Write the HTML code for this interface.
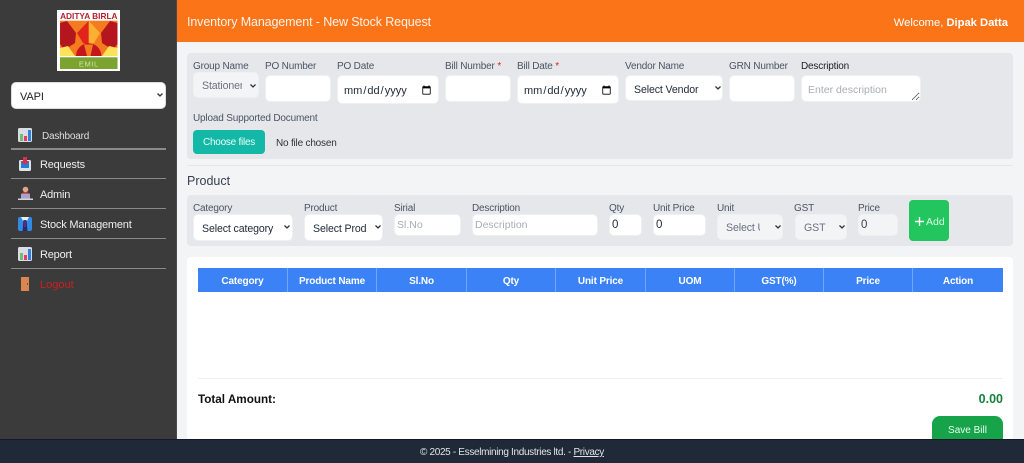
<!DOCTYPE html>
<html><head><meta charset="utf-8"><title>Inventory Management</title>
<style>
*{box-sizing:border-box}
html,body{margin:0;padding:0;width:1024px;height:463px;overflow:hidden;background:#f3f4f6;font-family:"Liberation Sans",sans-serif}
.a,.t,input,select,textarea{position:absolute}
.t{white-space:nowrap;line-height:14px;height:14px}
.l{font-size:10px;letter-spacing:-.18px;color:#4b5563}
input,select,textarea{border:1px solid #eef0f3;border-radius:5px;background:#fff;font-family:"Liberation Sans",sans-serif;font-size:10.5px;color:#1f2937;margin:0;outline:0}
input::placeholder,textarea::placeholder{color:#a9adb5}
select{appearance:none;-webkit-appearance:none;font-size:10.6px;letter-spacing:-.12px;padding:2px 16px 0 8px}
.g{background:#f3f4f6;color:#6b7280}
.n{font-size:11px;letter-spacing:-.2px;color:#eee}
.s{left:11px;width:155px;height:1px;background:#8a8a8a}
.h{top:268px;height:24px;line-height:27px;text-align:center;color:#fff;font-size:10px;letter-spacing:-.15px;font-weight:bold;border-right:1px solid #76a5f8}
textarea{resize:both;padding:8px 6px 0;overflow:hidden}
.c{position:absolute;fill:none;stroke:#333;stroke-width:1.300}
</style></head><body>
<div class="a" style="left:0;top:0;width:177px;height:463px;background:#3b3b3b;border-right:1px solid #4a4a4a"></div>
<svg class="a" style="left:57px;top:10px" width="63" height="61" viewBox="0 0 63 61">
<rect width="63" height="61" fill="#fff"/>
<text x="31.800" y="9" text-anchor="middle" font-family="Liberation Sans" font-weight="bold" font-size="8.300" fill="#b5202e">ADITYA BIRLA</text>
<rect x="3" y="10.700" width="57.500" height="35.300" fill="#f47b20"/>
<path d="M3 13 10 11 19 23 18 33 7 40 3 34Z" fill="#b5161d"/>
<path d="M60.500 13 53 11 44 23 45 33 56 40 60.500 34Z" fill="#b5161d"/>
<path d="M31.500 11 20 23 26 33 31.500 35Z" fill="#e2231a"/>
<path d="M32 11 43 23 37 33 32 35Z" fill="#fbb034"/>
<path d="M3 46V38L11 36 18 46ZM60.500 46V38L52 36 45 46Z" fill="#fde25a"/>
<path d="M19 46A12.700 12.700 0 0 1 44.400 46Z" fill="#c4161c"/>
<path d="M30 46 27 34.500H36L33.500 46Z" fill="#f47b20"/>
<rect x="3" y="47.300" width="57.500" height="11.700" fill="#7aa32f"/>
<text x="31.800" y="56.500" text-anchor="middle" font-family="Liberation Sans" font-size="7.500" letter-spacing=".6" fill="#cfe3a6">EMIL</text>
</svg>
<select style="left:11px;top:82px;width:155px;height:27px;font-size:11px;color:#222;border-color:#ddd"><option>VAPI</option></select>
<svg class="c" style="left:157px;top:93px" width="6" height="4"><path d="M.5.5 3 3 5.500.5"/></svg>

<svg class="a" style="left:18px;top:128px" width="15" height="14" viewBox="0 0 15 14"><rect width="14" height="14" rx="1.500" fill="#d9dde3"/><rect x="2" y="6" width="3" height="7" fill="#6cc070"/><rect x="6" y="8" width="3" height="5" fill="#e8386d"/><rect x="10" y="2" width="3" height="11" fill="#2f80d8"/></svg>
<div class="t n" style="left:42px;top:130px;font-size:10px;color:#ddd">Dashboard</div>
<div class="a s" style="top:148px;height:2px"></div>
<svg class="a" style="left:19px;top:157px" width="13" height="14" viewBox="0 0 13 14"><rect y="3" width="12" height="11" rx="1.500" fill="#dfe3e8"/><rect x="2" y="5" width="8" height="6" fill="#1f7fd8"/><path d="M4 0H8V4H10.500L6 8 1.500 4H4Z" fill="#d6304f"/></svg>
<div class="t n" style="left:40px;top:158px">Requests</div>
<div class="a s" style="top:178px"></div>
<svg class="a" style="left:18px;top:186px" width="15" height="14" viewBox="0 0 15 14"><circle cx="7.500" cy="3.500" r="2.800" fill="#e3a58a"/><path d="M3 12V8.500Q3 6.500 7.500 6.500T12 8.500V12Z" fill="#c9544f"/><rect x="3" y="8" width="9" height="5" fill="#a9a3c7"/><rect y="12.500" width="15" height="1.500" fill="#d5d5d8"/></svg>
<div class="t n" style="left:40px;top:188px">Admin</div>
<div class="a s" style="top:208px"></div>
<svg class="a" style="left:18px;top:217px" width="14" height="14" viewBox="0 0 14 14"><rect width="14" height="14" rx="2" fill="#2f8be6"/><path d="M3 0H11L9 4H5Z" fill="#e6eef8"/><path d="M5.500 3H8.500L9.500 14H4.500Z" fill="#2c2a6b"/><path d="M6.300 3H7.700L8 10H6Z" fill="#6d2a6b"/></svg>
<div class="t n" style="left:40px;top:218px">Stock Management</div>
<div class="a s" style="top:238px"></div>
<svg class="a" style="left:18px;top:247px" width="15" height="14" viewBox="0 0 15 14"><rect width="14" height="14" rx="1.500" fill="#d9dde3"/><rect x="2" y="6" width="3" height="7" fill="#6cc070"/><rect x="6" y="8" width="3" height="5" fill="#e8386d"/><rect x="10" y="2" width="3" height="11" fill="#2f80d8"/></svg>
<div class="t n" style="left:40px;top:248px">Report</div>
<div class="a s" style="top:268px"></div>
<svg class="a" style="left:21px;top:277px" width="8" height="14" viewBox="0 0 8 14"><rect width="8" height="14" fill="#d98650"/><rect x="6" y="6" width="1" height="2" fill="#8a4a24"/></svg>
<div class="t" style="left:40px;top:278px;font-size:11px;color:#cc1f1f">Logout</div>

<div class="a" style="left:177px;top:0;width:847px;height:42px;background:#fb7518"></div>
<div class="t" style="left:187px;top:15px;font-size:12.500px;letter-spacing:-.12px;font-weight:500;color:#fff2e8">Inventory Management - New Stock Request</div>
<div class="t" style="right:16px;top:16px;font-size:11.200px;color:#fff">Welcome, <b>Dipak Datta</b></div>

<div class="a" style="left:187px;top:53px;width:826px;height:106px;background:#e5e7eb;border-radius:4px"></div>
<div class="t l" style="left:193px;top:60px">Group Name</div>
<select class="g" style="left:193px;top:72px;width:66px;height:26px"><option>Stationery</option></select>
<svg class="c" style="left:250px;top:84px" width="6" height="4"><path d="M.5.5 3 3 5.500.5"/></svg>
<div class="t l" style="left:265px;top:60px">PO Number</div>
<input style="left:265px;top:75px;width:66px;height:27px">
<div class="t l" style="left:337px;top:60px">PO Date</div>
<input type="date" style="left:337px;top:75px;width:102px;height:29px;padding:2px 4px 0 5px;font-size:11px">
<div class="t l" style="left:445px;top:60px">Bill Number <span style="color:#e02424">*</span></div>
<input style="left:445px;top:75px;width:66px;height:27px">
<div class="t l" style="left:517px;top:60px">Bill Date <span style="color:#e02424">*</span></div>
<input type="date" style="left:517px;top:75px;width:102px;height:29px;padding:2px 4px 0 5px;font-size:11px">
<div class="t l" style="left:625px;top:60px">Vendor Name</div>
<select style="left:625px;top:75px;width:98px;height:26px;padding-top:3px"><option>Select Vendor</option></select>
<svg class="c" style="left:715px;top:86px" width="6" height="4"><path d="M.5.5 3 3 5.500.5"/></svg>
<div class="t l" style="left:729px;top:60px">GRN Number</div>
<input style="left:729px;top:75px;width:66px;height:27px">
<div class="t l" style="left:801px;top:60px;color:#222;font-weight:500">Description</div>
<textarea placeholder="Enter description" style="left:801px;top:75px;width:120px;height:27px"></textarea>
<div class="t l" style="left:193px;top:112px">Upload Supported Document</div>
<div class="a" style="left:193px;top:130px;width:72px;height:24px;background:#14b8a6;border-radius:4px;color:#eafffb;font-size:10px;letter-spacing:-.25px;text-align:center;line-height:26px">Choose files</div>
<div class="t" style="left:276px;top:137px;font-size:10px;letter-spacing:-.2px;color:#333">No file chosen</div>
<div class="a" style="left:187px;top:165px;width:826px;height:1px;background:#e5e7eb"></div>

<div class="t" style="left:187px;top:174px;font-size:12.500px;color:#374151">Product</div>
<div class="a" style="left:187px;top:195px;width:826px;height:51px;background:#e5e7eb;border-radius:4px"></div>
<div class="t l" style="left:193px;top:202px">Category</div>
<select style="left:193px;top:214px;width:100px;height:27px"><option>Select category</option></select>
<svg class="c" style="left:284px;top:225px" width="6" height="4"><path d="M.5.5 3 3 5.500.5"/></svg>
<div class="t l" style="left:304px;top:202px">Product</div>
<select style="left:304px;top:214px;width:79px;height:27px"><option>Select Product</option></select>
<svg class="c" style="left:375px;top:225px" width="6" height="4"><path d="M.5.5 3 3 5.500.5"/></svg>
<div class="t l" style="left:394px;top:202px">Sirial</div>
<input placeholder="Sl.No" style="left:394px;top:214px;width:67px;height:22px;padding:0 2px">
<div class="t l" style="left:472px;top:202px">Description</div>
<input placeholder="Description" style="left:472px;top:214px;width:126px;height:22px;padding:0 2px">
<div class="t l" style="left:609px;top:202px">Qty</div>
<input value="0" style="left:609px;top:214px;width:33px;height:22px;padding:0 2px;font-size:11.500px">
<div class="t l" style="left:653px;top:202px">Unit Price</div>
<input value="0" style="left:653px;top:214px;width:53px;height:22px;padding:0 2px;font-size:11.500px">
<div class="t l" style="left:717px;top:202px">Unit</div>
<select class="g" style="left:717px;top:214px;width:66px;height:26px;padding-right:22px"><option>Select Unit</option></select>
<svg class="c" style="left:775px;top:225px" width="6" height="4"><path d="M.5.5 3 3 5.500.5"/></svg>
<div class="t l" style="left:794px;top:202px">GST</div>
<select class="g" style="left:795px;top:214px;width:52px;height:26px"><option>GST</option></select>
<svg class="c" style="left:839px;top:225px" width="6" height="4"><path d="M.5.5 3 3 5.500.5"/></svg>
<div class="t l" style="left:858px;top:202px">Price</div>
<input class="g" value="0" style="left:858px;top:214px;width:40px;height:22px;padding:0 2px;color:#374151;font-size:11.500px">
<div class="a" style="left:909px;top:200px;width:40px;height:41px;background:#22c55e;border-radius:4px"></div>
<svg class="a" style="left:915px;top:217px" width="9" height="9"><path d="M4.500 0V9M0 4.500H9" stroke="#fff" stroke-width="1.400"/></svg>
<div class="t" style="left:926px;top:215px;font-size:10.500px;color:#d9fbe5">Add</div>

<div class="a" style="left:187px;top:257px;width:826px;height:190px;background:#fff;border-radius:4px"></div>
<div class="a" style="left:198px;top:268px;width:805px;height:24px;background:#3b82f6"></div>
<div class="a h" style="left:198px;width:90px">Category</div>
<div class="a h" style="left:288px;width:89px">Product Name</div>
<div class="a h" style="left:377px;width:90px">Sl.No</div>
<div class="a h" style="left:467px;width:89px">Qty</div>
<div class="a h" style="left:556px;width:90px">Unit Price</div>
<div class="a h" style="left:646px;width:89px">UOM</div>
<div class="a h" style="left:735px;width:89px">GST(%)</div>
<div class="a h" style="left:824px;width:89px">Price</div>
<div class="a h" style="left:913px;width:90px;border:0">Action</div>
<div class="a" style="left:198px;top:378px;width:805px;height:1px;background:#eceef0"></div>
<div class="t" style="left:198px;top:393px;font-size:11.700px;font-weight:bold;color:#111">Total Amount:</div>
<div class="t" style="right:21px;top:392px;font-size:12.500px;font-weight:bold;color:#15803d">0.00</div>
<div class="a" style="left:932px;top:416px;width:71px;height:32px;background:#16a34a;border-radius:8px;color:#e8fff0;font-size:10px;text-align:center;line-height:29px">Save Bill</div>

<div class="a" style="left:0;top:439px;width:1024px;height:24px;background:#1f2937;border-top:1px solid #111827"></div>
<div class="t" style="left:420px;top:446px;font-size:10px;letter-spacing:-.33px;color:#e2e4e8">© 2025 - Esselmining Industries ltd. - <u>Privacy</u></div>
</body></html>
